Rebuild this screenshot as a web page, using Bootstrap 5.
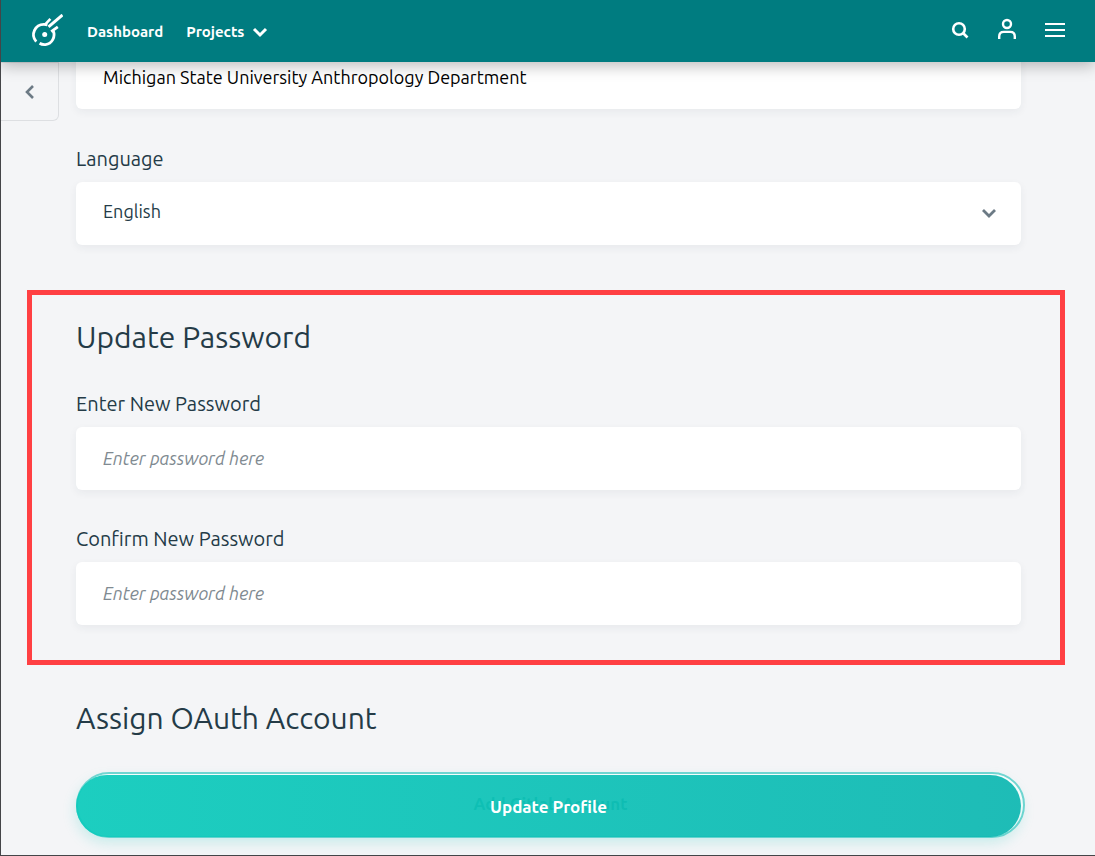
<!DOCTYPE html>
<html lang="en">
<head>
<meta charset="utf-8">
<meta name="viewport" content="width=device-width, initial-scale=1">
<title>Update Profile</title>
<link href="https://cdn.jsdelivr.net/npm/bootstrap@5.3.0/dist/css/bootstrap.min.css" rel="stylesheet">
<style>
  body { font-family: Ubuntu, "Noto Sans", sans-serif; color: #243b47; background: #f4f5f7; }
  .page { border-left: 1px solid #444548; border-bottom: 1px solid #444548; }
  .topbar { height: 62px; padding: 0 29px 0 28px; background: #007c80; box-shadow: 0 4px 14px rgba(0, 0, 0, .26); }
  .topbar a, .topbar button { color: #fff; font-size: 15px; line-height: 24px; font-weight: 700; text-decoration: none; }
  .topbar svg, .back svg { display: block; }
  .nav-texts { padding-top: 2px; gap: 23px; }
  .nav-icons { gap: 25px; padding-bottom: 2px; }
  .back { top: 62px; left: 0; width: 58px; height: 59px; border: 1px solid #dddfe2; border-left: 0; border-radius: 0 0 6px 0; background: #f4f5f7; color: #6c7a85; }
  .content { padding: 0 30px 0 26px; margin-top: -16px; }
  .block { padding: 0 44px 0 49px; }
  .form-label { font-size: 20px; line-height: 24px; margin: 0 0 11px; }
  .field { height: 63px; border: 0; border-radius: 6px; padding: 0 27px 2px; font-size: 18px; color: #243b47; background-color: #fff; box-shadow: 0 3px 8px rgba(36, 59, 71, .06); }
  .field-org { color: #000; }
  .field::placeholder { color: #808a91; font-style: italic; opacity: 1; }
  select.field { background-image: url("data:image/svg+xml,%3Csvg xmlns='http://www.w3.org/2000/svg' viewBox='0 0 16 16'%3E%3Cpath d='M2 4l6 6 6-6' fill='none' stroke='%236c7a85' stroke-width='2.8'/%3E%3C/svg%3E"); background-size: 16px 16px; background-position: right 24px center; padding-bottom: 4px; }
  .gap-field { margin-bottom: 37px; }
  .gap-org { margin-bottom: 38px; }
  .section-title { font-size: 30px; line-height: 36px; font-weight: 400; margin: 0 0 36px; }
  .password-box { border: 5px solid #ff4043; padding: 24px 39px 35px 44px; margin: 45px 0 35px; }
  .password-box .section-title { margin-bottom: 37px; }
  .action { margin-right: -4px; }
  .outline-btn { height: 66px; border: 2px solid #73d6d2; border-radius: 33px; background: #fff; color: #007f79; font-size: 17px; line-height: 24px; font-weight: 700; padding: 0 0 2px; }
  .save-btn { top: 3px; left: 0; right: 4px; height: 62px; border: 0; border-radius: 31px; padding: 2px 0 0; color: #fff; font-size: 17px; line-height: 24px; font-weight: 700; background: linear-gradient(90deg, rgba(14, 203, 188, .94), rgba(16, 184, 178, .94)); box-shadow: 0 5px 14px rgba(24, 200, 187, .22); }
</style>
</head>
<body>
<div class="page min-vh-100 vh-100 overflow-hidden position-relative">
  <nav class="topbar d-flex align-items-center position-relative z-3">
    <a href="#" aria-label="Home">
      <svg width="34" height="34" viewBox="0 0 34 34" fill="none" stroke="#fff" stroke-width="2.8">
        <path d="M7.2 27.6A10.300 10.300 0 0 1 15 10.400c1.700 0 2.500.2 3.400.5"/>
        <path d="M15.800 10.800L21.400 4.800" stroke-width="2.600"/>
        <path d="M19.500 12.800L33.500 1" stroke-width="3"/>
        <path d="M22.200 17.600l6.600-4.800M24.200 16.500c2.600 6.500-1.200 13.300-7.700 14.100-1.900.2-4.200-.2-5.900-1.300"/>
        <circle cx="15.700" cy="20.500" r="2.500" fill="#fff" stroke="none"/>
      </svg>
    </a>
    <div class="nav-texts d-flex align-items-center ms-4">
      <a href="#">Dashboard</a>
      <button type="button" class="btn p-0 border-0 d-flex align-items-center gap-2">Projects
        <svg width="16" height="16" viewBox="0 0 16 16" fill="none" stroke="currentColor" stroke-width="3"><path d="M2 5l6 6 6-6"/></svg>
      </button>
    </div>
    <div class="nav-icons ms-auto d-flex align-items-center">
      <button type="button" class="btn p-0 border-0" aria-label="Search">
        <svg width="20" height="20" viewBox="0 0 20 20" fill="none" stroke="currentColor" stroke-width="2.6"><circle cx="9" cy="9" r="5.800"/><path d="M13 13l4.500 4.500"/></svg>
      </button>
      <button type="button" class="btn p-0 border-0" aria-label="Account">
        <svg width="24" height="24" viewBox="0 0 24 24" fill="none" stroke="currentColor" stroke-width="2.400"><circle cx="12" cy="6" r="4"/><path d="M4.200 21v-2.500c0-3 1.800-4.600 4.600-4.600h6.400c2.800 0 4.600 1.600 4.600 4.600V21"/></svg>
      </button>
      <button type="button" class="btn p-0 border-0" aria-label="Menu">
        <svg width="22" height="22" viewBox="0 0 22 22" fill="none" stroke="currentColor" stroke-width="2"><path d="M1 5h20M1 11h20M1 17h20"/></svg>
      </button>
    </div>
  </nav>
  <button type="button" class="back position-absolute d-flex align-items-center justify-content-center p-0 z-2" aria-label="Back">
    <svg width="16" height="16" viewBox="0 0 16 16" fill="none" stroke="currentColor" stroke-width="2.600"><path d="M11 2L5 8l6 6"/></svg>
  </button>
  <main class="content">
    <form>
      <div class="block">
        <input type="text" class="form-control field field-org gap-org" aria-label="Organization" value="Michigan State University Anthropology Department">
        <label class="form-label d-block" for="language">Language</label>
        <select id="language" class="form-select field"><option>English</option></select>
      </div>
      <section class="password-box">
        <h2 class="section-title">Update Password</h2>
        <label class="form-label d-block" for="newPassword">Enter New Password</label>
        <input type="password" id="newPassword" class="form-control field gap-field" placeholder="Enter password here">
        <label class="form-label d-block" for="confirmPassword">Confirm New Password</label>
        <input type="password" id="confirmPassword" class="form-control field" placeholder="Enter password here">
      </section>
      <section class="block">
        <h2 class="section-title">Assign OAuth Account</h2>
        <div class="action position-relative">
          <button type="button" class="outline-btn w-100">Add Gitlab Account</button>
          <button type="submit" class="save-btn position-absolute">Update Profile</button>
        </div>
      </section>
    </form>
  </main>
</div>
<script src="https://cdn.jsdelivr.net/npm/bootstrap@5.3.0/dist/js/bootstrap.bundle.min.js"></script>
</body>
</html>
